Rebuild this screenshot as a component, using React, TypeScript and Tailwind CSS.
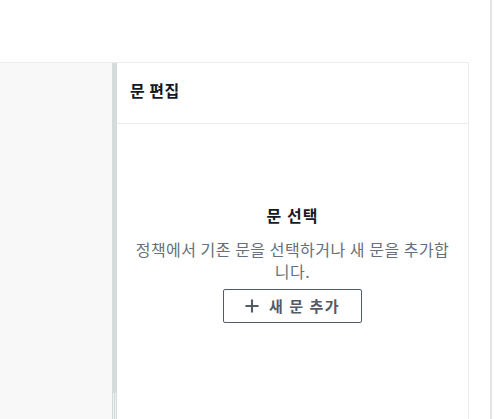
import React from "react";

const font = { fontFamily: '"Noto Sans CJK KR", "Noto Sans", sans-serif' };

function PlusIcon() {
  return (
    <svg width="14" height="14" viewBox="0 0 16 16" fill="none" stroke="#545b64" strokeWidth="2.4">
      <path d="M8 0.5v15M0.5 8h15" />
    </svg>
  );
}

export default function App() {
  return (
    <div className="flex h-[419px] w-[494px] overflow-hidden bg-white text-[#16191f]" style={font}>
      <div className="flex w-[469px] flex-col">
        <div className="h-[62px] shrink-0" />
        <div className="flex flex-1 border-t border-[#eaeded]">
          {/* navigator */}
          <div className="w-[112px] bg-[#f8f8f8]" />
          {/* splitter */}
          <div className="relative w-[5px] bg-[#d5dbdb]">
            <div className="absolute bottom-0 left-[1px] flex h-[26px] gap-[1px]">
              <div className="w-px bg-[#eef1f1]" />
              <div className="w-px bg-[#eef1f1]" />
            </div>
          </div>
          {/* editor */}
          <div className="flex flex-1 flex-col border-r border-[#eaeded]">
            <div className="flex h-[61px] items-center border-b border-[#eaeded] px-[13px] pb-[7px]">
              <h2 className="text-[16px] font-bold tracking-[0.5px]">문 편집</h2>
            </div>
            <div className="flex flex-col items-center px-[15px] pt-[80px] text-center">
              <div className="text-[16px] font-bold leading-[22px] tracking-[1px]">문 선택</div>
              <p className="mt-[12px] text-[16px] leading-[22px] tracking-[0.5px] text-[#66707a]">
                정책에서 기존 문을 선택하거나 새 문을 추가합니다.
              </p>
              <button className="mt-[7px] flex h-[34px] w-[139px] items-center justify-center gap-[10px] rounded-[2px] border border-[#545b64] text-[15px] font-bold tracking-[1.5px] text-[#545b64]">
                <PlusIcon />
                <span>새 문 추가</span>
              </button>
            </div>
          </div>
        </div>
      </div>
      <div className="w-[21px]" />
      <div className="w-[2px] bg-[#e3e5e5]" />
    </div>
  );
}
